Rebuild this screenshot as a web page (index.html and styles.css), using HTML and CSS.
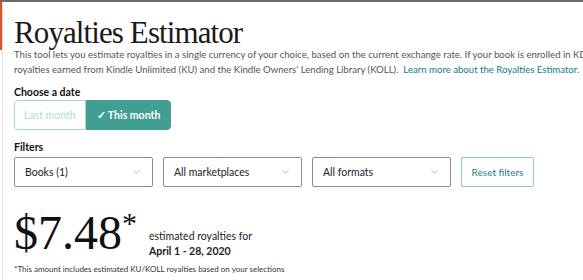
FILE: index.html
```html
<!DOCTYPE html>
<html>
<head>
  <title>Royalties Estimator</title>
  <link rel="stylesheet" href="styles.css">
</head>
<body>
  <div class="page">
    <!-- Left rail -->
    <div class="rail"><div class="rail-accent"></div></div>

    <div class="content">
      <h1>Royalties Estimator</h1>
      <p class="intro">
        This tool lets you estimate royalties in a single currency of your choice, based on the current exchange rate. If your book is enrolled in KDP Select, estimates include<br>
        royalties earned from Kindle Unlimited (KU) and the Kindle Owners' Lending Library (KOLL).&nbsp; <a href="#">Learn more about the Royalties Estimator.</a>
      </p>

      <!-- Date toggle -->
      <div class="label">Choose a date</div>
      <div class="toggle">
        <button class="toggle-btn">Last month</button>
        <button class="toggle-btn active">&#10003; This month</button>
      </div>

      <!-- Filters -->
      <div class="label">Filters</div>
      <div class="filters">
        <div class="select">Books (1) <svg class="caret" width="7" height="4" viewBox="0 0 7 4"><path d="M0.5 0.5 L3.5 3.2 L6.5 0.5" fill="none" stroke="#a8a8a8" stroke-width="0.9"/></svg></div>
        <div class="select">All marketplaces <svg class="caret" width="7" height="4" viewBox="0 0 7 4"><path d="M0.5 0.5 L3.5 3.2 L6.5 0.5" fill="none" stroke="#a8a8a8" stroke-width="0.9"/></svg></div>
        <div class="select">All formats <svg class="caret" width="7" height="4" viewBox="0 0 7 4"><path d="M0.5 0.5 L3.5 3.2 L6.5 0.5" fill="none" stroke="#a8a8a8" stroke-width="0.9"/></svg></div>
        <button class="reset">Reset filters</button>
      </div>

      <!-- Result -->
      <div class="result">
        <div class="amount">$7.48<sup>*</sup></div>
        <div class="period">
          <div>estimated royalties for</div>
          <strong>April 1 - 28, 2020</strong>
        </div>
      </div>
      <p class="note">*This amount includes estimated KU/KOLL royalties based on your selections</p>
    </div>
  </div>
</body>
</html>
```

FILE: styles.css
```css
/* Global */
html, body {
  margin: 0;
  overflow: hidden;
  background-color: #fff;
}
body {
  font-family: Lato, "Liberation Sans", sans-serif;
  color: #111;
  border-top: 2px solid #6b6b6b;
}
.page {
  display: flex;
  width: 583px;
  min-height: 278px;
  overflow: hidden;
}
.rail {
  flex: none;
  width: 2px;
  border-right: 1px solid #e3e3e3;
}
.rail-accent {
  height: 48px;
  background-color: #d9532c;
}
.content {
  flex: 1;
  min-width: 0;
  padding: 14px 0 0 11px;
}
h1 {
  font-family: "Liberation Serif", serif;
  font-weight: normal;
  font-size: 31px;
  line-height: 33px;
  letter-spacing: -0.9px;
  margin: 0;
  color: #1a1a1a;
}
.intro {
  margin: -2px 0 8px;
  font-size: 9.6px;
  line-height: 15px;
  color: #555;
  white-space: nowrap;
}
.intro a {
  color: #0e7c8c;
  text-decoration: none;
}
.label {
  font-size: 10.5px;
  font-weight: bold;
  line-height: 14px;
  margin-bottom: 1px;
  color: #111;
}
/* Date toggle */
.toggle {
  display: flex;
  margin-bottom: 10px;
}
.toggle-btn {
  height: 30px;
  font-family: inherit;
  font-size: 10.5px;
  border: 1px solid #9fd8d6;
  background-color: #fff;
  color: #a9dedd;
  padding: 0 9px;
  border-radius: 4px 0 0 4px;
}
.toggle-btn.active {
  background-color: #429e92;
  border-color: #429e92;
  color: #fff;
  font-weight: bold;
  border-radius: 0 4px 4px 0;
  padding: 0 10px;
}
.filters {
  display: flex;
  gap: 10px;
  margin-top: 3px;
  margin-bottom: 23px;
}
.select {
  box-sizing: border-box;
  width: 139px;
  height: 30px;
  border: 1px solid #8c8c8c;
  border-radius: 2px;
  padding: 0 12px 0 10px;
  display: flex;
  align-items: center;
  justify-content: space-between;
  font-size: 10.5px;
  color: #222;
}
.reset {
  box-sizing: border-box;
  width: 73px;
  height: 30px;
  font-family: inherit;
  font-size: 10px;
  border: 1px solid #8cc7cf;
  border-radius: 2px;
  background-color: #fff;
  color: #1a7f8e;
}
/* Result */
.result {
  display: flex;
  align-items: flex-end;
}
.amount {
  font-family: "Liberation Serif", serif;
  font-size: 48px;
  line-height: 46px;
  color: #111;
}
.amount sup {
  font-size: 30px;
  vertical-align: 16px;
  line-height: 0;
}
.period {
  margin: 0 0 -3px 12px;
  font-size: 10.5px;
  line-height: 15px;
  color: #222;
}
.note {
  margin: 8px 0 0;
  font-size: 8px;
  line-height: 10px;
  color: #333;
}
```
